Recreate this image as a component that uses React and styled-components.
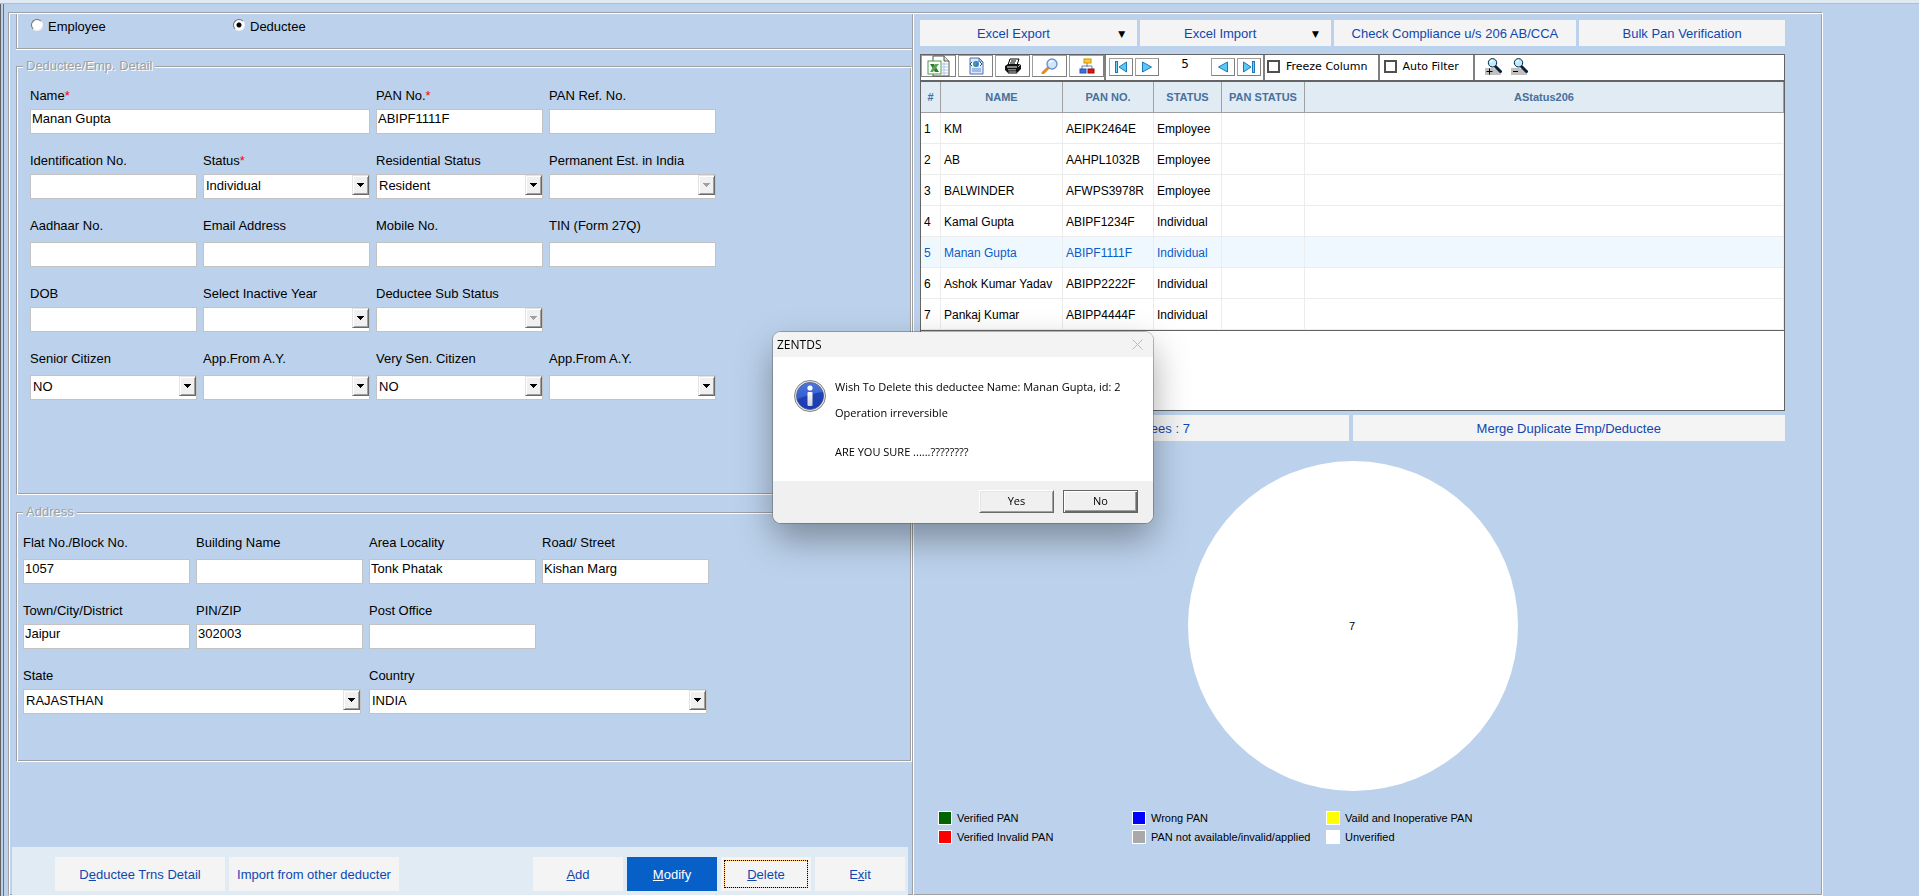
import React, { useId, useState } from "react";
import styled, { createGlobalStyle, css } from "styled-components";

const GlobalStyle = createGlobalStyle`
  * {
    box-sizing: border-box;
  }
  body {
    margin: 0;
    background: #bcd2ec;
    color: #000;
    font-family: "Liberation Sans", Arial, sans-serif;
    font-size: 13px;
    line-height: 16px;
  }
  button, input, select {
    font: inherit;
    color: inherit;
  }
`;

// sunken two-tone line used by every frame of the form
const etched = css`
  border: 1px solid;
  border-color: #a0a0a0 #fff #fff #a0a0a0;
  box-shadow: inset 1px 1px #fff, inset -1px -1px #a0a0a0;
`;

const Page = styled.div`
  min-height: 100vh;
  display: flex;
  flex-direction: column;
`;

const TopStrip = styled.div`
  height: 4px;
  background: #dfeaf2;
  border-bottom: 1px solid #b9bcc2;
`;

const Workspace = styled.div`
  flex: 1;
  display: flex;
  border-left: 1px solid #606060;
  padding-left: 2px;
`;

const Inner = styled.div`
  flex: 1;
  display: flex;
  border-left: 1px solid #707070;
  padding: 8px 96px 0 4px;
`;

const Frame = styled.main`
  ${etched}
  flex: 1;
  display: grid;
  grid-template-columns: 905fr 908fr;
  padding: 1px 1px 0;
`;

const LeftPane = styled.div`
  min-width: 0;
  display: flex;
  flex-direction: column;
  border-right: 1px solid #fff;
  box-shadow: inset -1px 0 #a0a0a0;
  padding-right: 1px;
`;

const RadioGroup = styled.div`
  display: flex;
  height: 35px;
  margin-left: 6px;
  padding: 0 14px;
  border: solid #a0a0a0;
  border-width: 0 0 1px 1px;
  box-shadow: inset 1px 0 #fff, 0 1px #fff;
`;

const RadioLabel = styled.label`
  display: flex;
  align-items: flex-start;
  gap: 5px;
  width: 202px;
  padding-top: 5px;
`;

const Radio = styled.input`
  appearance: none;
  width: 12px;
  height: 12px;
  margin: 0;
  border: 1px solid;
  border-color: #707070 #f0f0f0 #f0f0f0 #707070;
  border-radius: 50%;
  background: #fff;
  &:checked {
    background: radial-gradient(circle, #000 2px, #fff 3px);
  }
`;

const Group = styled.fieldset`
  ${etched}
  min-width: 0;
  margin: 9px 0 0 6px;
  padding: ${(p) => (p.$tall ? "14px 6px 94px" : "15px 6px 47px")};
`;

const Legend = styled.legend`
  padding: 0 3px;
  background: #bcd2ec;
  color: #a0a0a0;
  text-shadow: 1px 1px #fff;
`;

const Rows = styled.div`
  display: flex;
  flex-direction: column;
  gap: 19px;
  padding: 0 ${(p) => (p.$indent ? "7px" : "0")};
`;

const Row = styled.div`
  display: grid;
  grid-template-columns: repeat(4, minmax(0, 167px));
  gap: 6px;
`;

const FieldBox = styled.div`
  grid-column: span ${(p) => p.$span || 1};
  display: flex;
  flex-direction: column;
  gap: ${(p) => (p.$loose ? "8px" : "5px")};
`;

const Star = styled.span`
  color: #f00;
`;

const TextInput = styled.input`
  width: 100%;
  height: 25px;
  padding: 0 1px 6px;
  border: 1px solid #c3c3c3;
  border-radius: 0;
  background: #fff;
`;

const SelectFrame = styled.div`
  display: flex;
  height: 25px;
  border: 1px solid #c3c3c3;
  background: #fff;
  margin-right: ${(p) => (p.$span > 1 ? "2px" : "0")};
`;

const Select = styled.select`
  appearance: none;
  flex: 1;
  min-width: 0;
  border: none;
  background: transparent;
  padding: 0 2px 2px;
  opacity: 1;
`;

const Arrow = styled.span`
  display: flex;
  align-items: center;
  justify-content: center;
  width: 17px;
  height: 20px;
  background: #f0f0f0;
  border: 1px solid;
  border-color: #e3e3e3 #696969 #696969 #e3e3e3;
  box-shadow: inset 1px 1px #fff, inset -1px -1px #a0a0a0;
`;

const ActionBar = styled.div`
  display: flex;
  gap: 4px;
  margin: auto 4px 0 2px;
  padding: 10px 3px 4px 43px;
  background: #e0ebf3;
`;

const FlatButton = styled.button`
  display: flex;
  align-items: center;
  justify-content: center;
  flex: ${(p) => p.$grow || 1} 1 0;
  height: 26px;
  padding: 2px 0 0;
  border: none;
  border-radius: 0;
  background: #f4f4f4;
  color: #0f47b0;
`;

const BarButton = styled(FlatButton)`
  flex: 0 1 ${(p) => (p.$wide ? "170px" : "90px")};
  height: 34px;
  margin-left: ${(p) => (p.$push ? "auto" : "0")};
  ${(p) => p.$active && "background: #0760c8; color: #fff;"}
  ${(p) =>
    p.$focused &&
    `outline: 1px dotted #000; outline-offset: -4px; box-shadow: inset 0 0 0 3px #f4f4f4, inset 0 0 0 4px #ffc878;`}
`;

const RightPane = styled.div`
  min-width: 0;
  padding: 6px 36px 0 6px;
`;

const ButtonRow = styled.div`
  display: flex;
  gap: ${(p) => (p.$wide ? "4px" : "3px")};
`;

const MenuText = styled.span`
  flex: 1;
`;

const MenuArrow = styled.span`
  width: 30px;
  color: #000;
  font-family: "DejaVu Sans", sans-serif;
  font-size: 9px;
`;

const GridBox = styled.section`
  margin: 8px 0 4px;
  padding-bottom: 79px;
  border: 1px solid #646464;
  background: #fff;
`;

const Toolbar = styled.div`
  display: flex;
  height: 27px;
  border-bottom: 2px solid #646464;
  font-family: "DejaVu Sans", Verdana, sans-serif;
  font-size: 11px;
`;

const ToolSection = styled.div`
  display: flex;
  align-items: ${(p) => (p.$top ? "flex-start" : "center")};
  gap: ${(p) => p.$gap || 2}px;
  padding: 0 ${(p) => p.$end || 0}px 2px ${(p) => p.$start || 0}px;
  border-right: ${(p) => (p.$last ? "none" : "2px solid #808080")};
`;

const ToolButton = styled.button`
  display: flex;
  align-items: center;
  justify-content: center;
  width: 35px;
  height: 22px;
  padding: 0;
  background: #fff;
  border: 1px solid #808080;
  border-top-color: #a0a0a0;
  border-left-color: #a0a0a0;
`;

const NavButton = styled(ToolButton)`
  width: 24px;
  height: 18px;
`;

const PlainButton = styled.button`
  display: flex;
  padding: 0;
  border: none;
  background: none;
`;

const Position = styled.output`
  width: 48px;
  text-align: center;
  line-height: 12px;
  padding-bottom: 5px;
  font-size: 12px;
`;

const CheckLabel = styled.label`
  display: flex;
  align-items: center;
  gap: 6px;
`;

const Check = styled.input`
  appearance: none;
  width: 13px;
  height: 13px;
  margin: 0;
  border: 2px solid #505050;
  background: #fff;
`;

const Table = styled.table`
  width: 100%;
  table-layout: fixed;
  border-collapse: separate;
  border-spacing: 0;
  border-bottom: 1px solid #646464;
  font-size: 12px;
`;

const Th = styled.th`
  height: 31px;
  padding: 0;
  background: #e0ebf3;
  border-right: 1px solid #a0a0a0;
  border-bottom: 1px solid #a0a0a0;
  color: #48709c;
  font-size: 11px;
`;

const Td = styled.td`
  height: 31px;
  padding: 2px 3px 0;
  border-right: 1px solid #ececec;
  border-bottom: 1px solid #ececec;
  white-space: nowrap;
`;

const Tr = styled.tr`
  ${(p) => p.$selected && "background: #f0f8ff; color: #0a5cc8;"}
`;

const Pie = styled.svg`
  display: block;
  width: 330px;
  max-width: 100%;
  margin: 20px auto;
`;

const PieLegend = styled.ul`
  display: grid;
  grid-template-columns: repeat(3, 194px);
  grid-auto-rows: 14px;
  row-gap: 5px;
  margin: 0;
  padding: 0 18px;
  list-style: none;
  font-size: 11px;
`;

const LegendItem = styled.li`
  display: flex;
  align-items: center;
  gap: 5px;
  white-space: nowrap;
`;

const Swatch = styled.span`
  width: 14px;
  height: 14px;
  border: 1px solid #fff;
  background: ${(p) => p.$color};
`;

const Dialog = styled.div`
  position: fixed;
  top: 332px;
  left: 773px;
  width: 380px;
  border-radius: 8px;
  overflow: hidden;
  background: #fff;
  box-shadow: 0 0 0 1px rgba(80, 80, 80, 0.4), 0 16px 36px rgba(0, 0, 0, 0.35);
  font-family: "Open Sans", "Noto Sans", sans-serif;
  font-size: 11px;
  line-height: 13px;
`;

const DialogTitle = styled.header`
  display: flex;
  align-items: center;
  justify-content: space-between;
  height: 25px;
  padding: 0 10px 0 4px;
  background: #f3f3f3;
  font-size: 12px;
`;

const DialogBody = styled.div`
  display: flex;
  gap: 9px;
  height: 124px;
  padding: 23px 21px 0;
`;

const DialogText = styled.p`
  margin: 0;
  white-space: pre;
`;

const DialogFooter = styled.footer`
  display: flex;
  justify-content: flex-end;
  gap: 9px;
  padding: 9px 15px 10px;
  background: #f0f0f0;
`;

const DialogButton = styled.button`
  width: 75px;
  height: 23px;
  padding: 0 0 2px;
  background: #f0f0f0;
  border: 1px solid;
  border-color: ${(p) => (p.$default ? "#646464" : "#fff #696969 #696969 #fff")};
  box-shadow: ${(p) =>
    p.$default
      ? "inset 1px 1px #fff, inset -1px -1px #696969, inset -2px -2px #a0a0a0"
      : "inset 1px 1px #e3e3e3, inset -1px -1px #a0a0a0"};
`;

const rows = [
  ["KM", "AEIPK2464E", "Employee"],
  ["AB", "AAHPL1032B", "Employee"],
  ["BALWINDER", "AFWPS3978R", "Employee"],
  ["Kamal Gupta", "ABIPF1234F", "Individual"],
  ["Manan Gupta", "ABIPF1111F", "Individual"],
  ["Ashok Kumar Yadav", "ABIPP2222F", "Individual"],
  ["Pankaj Kumar", "ABIPP4444F", "Individual"],
];

const panStatuses = [
  ["#006400", "Verified PAN"],
  ["#0000ff", "Wrong PAN"],
  ["#ffff00", "Vaild and Inoperative PAN"],
  ["#ff0000", "Verified Invalid PAN"],
  ["#a9a9a9", "PAN not available/invalid/applied"],
  ["#ffffff", "Unverified"],
];

function Field({ label, required, value = "", options, disabled, loose, span }) {
  const id = useId();
  return (
    <FieldBox $loose={loose} $span={span}>
      <label htmlFor={id}>
        {label}
        {required && <Star>*</Star>}
      </label>
      {options ? (
        <SelectFrame $span={span}>
          <Select id={id} defaultValue={value} disabled={disabled}>
            {options.map((o) => (
              <option key={o}>{o}</option>
            ))}
          </Select>
          <Arrow aria-hidden="true">
            <svg width="7" height="4" viewBox="0 0 7 4" shapeRendering="crispEdges">
              <path d="M0 0H7V1H6V2H5V3H4V4H3V3H2V2H1V1H0Z" fill={disabled ? "#a0a0a0" : "#000"} />
            </svg>
          </Arrow>
        </SelectFrame>
      ) : (
        <TextInput id={id} type="text" defaultValue={value} />
      )}
    </FieldBox>
  );
}

const ExcelIcon = () => (
  <svg width="24" height="22" viewBox="0 0 24 22">
    <path d="M6 1h11l5 5v15H6z" fill="#fff" stroke="#555" />
    <path d="M17 1v5h5" fill="#ddd" stroke="#555" />
    <path d="M15 9h6M15 12h6M15 15h6M15 18h6M17 7v13" stroke="#a9c8e8" />
    <rect x="1" y="6" width="13" height="13" fill="#fff" stroke="#4c9a4c" />
    <path d="M3 9h4l5 8H8z" fill="#2a7a2a" />
    <path d="M12 9H8l-5 8h3z" fill="#59a659" />
  </svg>
);

const WebPageIcon = () => (
  <svg width="16" height="18" viewBox="0 0 16 18">
    <path d="M2 1h9l4 4v12H2z" fill="#dbe9fb" stroke="#4a6eb4" />
    <path d="M11 1v4h4z" fill="#b8cff0" stroke="#4a6eb4" />
    <path d="M3 5h11v4H3z" fill="#fff" />
    <circle cx="8" cy="7" r="3" fill="#2f7fd0" />
    <path d="M7 5c2 0 2 2 1 3s-2 0-2-1z" fill="#4fb04a" />
    <path d="M4 5L2 7l2 2M12 5l2 2-2 2" fill="none" stroke="#2c4a88" />
    <path d="M4 12h9M4 14h9" stroke="#6a8cc8" />
  </svg>
);

const PrinterIcon = () => (
  <svg width="18" height="16" viewBox="0 0 18 16">
    <path d="M6 1h9l-2 6H4z" fill="#fff" stroke="#000" />
    <path d="M7 3h5M6 5h5" stroke="#000" />
    <path d="M1 8l3-2h11l2 1v4l-3 3H3l-2-2z" fill="#111" />
    <path d="M3 9h10M4 12h8" stroke="#fff" />
    <path d="M14 9l2-2" stroke="#bbb" />
    <path d="M4 13h9v2H4z" fill="#ddd" stroke="#000" />
  </svg>
);

const SearchIcon = () => (
  <svg width="18" height="16" viewBox="0 0 18 16">
    <path d="M7 10l-5 5" stroke="#e08a28" strokeWidth="3" strokeLinecap="round" />
    <circle cx="11" cy="6" r="5" fill="#cfe6fb" stroke="#6f92d0" strokeWidth="1.4" />
    <path d="M8 5c1-2 3-2 4-2" stroke="#fff" fill="none" strokeWidth="1.4" />
  </svg>
);

const TreeIcon = () => (
  <svg width="16" height="16" viewBox="0 0 16 16">
    <path d="M8 5v4M3 11V8h10v3" fill="none" stroke="#6a7ea0" />
    <rect x="5" y="1" width="7" height="4" fill="#ffcc22" stroke="#c89210" />
    <rect x="1" y="11" width="6" height="4" fill="#3a6ee0" stroke="#2a50b0" />
    <rect x="9" y="11" width="6" height="4" fill="#d81818" stroke="#980c0c" />
  </svg>
);

function NavIcon({ back, end }) {
  return (
    <svg width="14" height="12" viewBox="0 0 14 12">
      <g transform={back ? "" : "translate(14 0) scale(-1 1)"}>
        {end && <rect x="1.500" y="0.500" width="2" height="11" fill="#6fd0f5" stroke="#1878b8" />}
        <path d={end ? "M12.500 1v10L5 6z" : "M11.500 1v10L2.500 6z"} fill="#5cc8f5" stroke="#1878b8" />
      </g>
    </svg>
  );
}

const ZoomIcon = ({ plus }) => (
  <svg width="17" height="17" viewBox="0 0 17 17">
    <path d="M0 10h8l8 3v4H0z" fill="#c0c0c0" />
    <path d={plus ? "M1.500 13.500h6M4.500 10.500v6" : "M2 13.500h5"} stroke="#000" />
    <path d="M10.500 8.500l5 5" stroke="#0a2038" strokeWidth="3" strokeLinecap="round" />
    <circle cx="7.500" cy="4.800" r="4.200" fill="#b8ecff" stroke="#0a2038" />
    <path d="M5.500 4l2-2" stroke="#fff" strokeWidth="1.500" />
  </svg>
);

const InfoIcon = () => (
  <svg width="32" height="32" viewBox="0 0 32 32">
    <defs>
      <linearGradient id="infoBlue" x1="0" y1="0" x2="0" y2="1">
        <stop offset="0" stopColor="#4c78dc" />
        <stop offset="1" stopColor="#2348c8" />
      </linearGradient>
      <linearGradient id="infoStem" x1="0" y1="0" x2="0" y2="1">
        <stop offset="0" stopColor="#fff" />
        <stop offset="1" stopColor="#d0d0d0" />
      </linearGradient>
    </defs>
    <circle cx="16" cy="16" r="15.500" fill="#e8e8e8" stroke="#808080" />
    <circle cx="16" cy="16" r="13.500" fill="url(#infoBlue)" stroke="#5a6a98" />
    <path d="M3 19C10 17 18 13 29 12a13 13 0 0 1-26 7z" fill="#1636a8" opacity="0.7" />
    <circle cx="16" cy="8" r="2.600" fill="#fff" />
    <rect x="13.500" y="12" width="5" height="14" rx="1" fill="url(#infoStem)" />
  </svg>
);

function DeducteeForm() {
  return (
    <>
      <Group $tall>
        <Legend>Deductee/Emp. Detail</Legend>
        <Rows $indent>
          <Row>
            <Field label="Name" required value="Manan Gupta" span={2} />
            <Field label="PAN No." required value="ABIPF1111F" />
            <Field label="PAN Ref. No." />
          </Row>
          <Row>
            <Field label="Identification No." />
            <Field label="Status" required value="Individual" options={["Individual", "Company"]} />
            <Field label="Residential Status" value="Resident" options={["Resident", "Non Resident"]} />
            <Field label="Permanent Est. in India" options={[""]} disabled />
          </Row>
          <Row>
            <Field label="Aadhaar No." loose />
            <Field label="Email Address" loose />
            <Field label="Mobile No." loose />
            <Field label="TIN (Form 27Q)" loose />
          </Row>
          <Row>
            <Field label="DOB" />
            <Field label="Select Inactive Year" options={[""]} />
            <Field label="Deductee Sub Status" options={[""]} disabled />
          </Row>
          <Row>
            <Field label="Senior Citizen" value="NO" options={["NO", "YES"]} loose />
            <Field label="App.From A.Y." options={[""]} loose />
            <Field label="Very Sen. Citizen" value="NO" options={["NO", "YES"]} loose />
            <Field label="App.From A.Y." options={[""]} loose />
          </Row>
        </Rows>
      </Group>

      <Group>
        <Legend>Address</Legend>
        <Rows>
          <Row>
            <Field label="Flat No./Block No." value="1057" loose />
            <Field label="Building Name" loose />
            <Field label="Area Locality" value="Tonk Phatak" loose />
            <Field label="Road/ Street" value="Kishan Marg" loose />
          </Row>
          <Row>
            <Field label="Town/City/District" value="Jaipur" />
            <Field label="PIN/ZIP" value="302003" />
            <Field label="Post Office" />
          </Row>
          <Row>
            <Field label="State" value="RAJASTHAN" options={["RAJASTHAN"]} span={2} />
            <Field label="Country" value="INDIA" options={["INDIA"]} span={2} />
          </Row>
        </Rows>
      </Group>
    </>
  );
}

function DeducteeGrid() {
  return (
    <GridBox>
      <Toolbar>
        <ToolSection $top>
          <ToolButton aria-label="Export to Excel"><ExcelIcon /></ToolButton>
          <ToolButton aria-label="Export to web page"><WebPageIcon /></ToolButton>
          <ToolButton aria-label="Print"><PrinterIcon /></ToolButton>
          <ToolButton aria-label="Search"><SearchIcon /></ToolButton>
          <ToolButton aria-label="Group"><TreeIcon /></ToolButton>
        </ToolSection>
        <ToolSection $start={3} $end={2}>
          <NavButton aria-label="First"><NavIcon back end /></NavButton>
          <NavButton aria-label="Next"><NavIcon /></NavButton>
          <Position>5</Position>
          <NavButton aria-label="Previous"><NavIcon back /></NavButton>
          <NavButton aria-label="Last"><NavIcon end /></NavButton>
        </ToolSection>
        <ToolSection $start={2} $end={10}>
          <CheckLabel>
            <Check type="checkbox" />
            Freeze Column
          </CheckLabel>
        </ToolSection>
        <ToolSection $start={4} $end={14}>
          <CheckLabel>
            <Check type="checkbox" />
            Auto Filter
          </CheckLabel>
        </ToolSection>
        <ToolSection $start={10} $gap={9} $last>
          <PlainButton aria-label="Zoom in"><ZoomIcon plus /></PlainButton>
          <PlainButton aria-label="Zoom out"><ZoomIcon /></PlainButton>
        </ToolSection>
      </Toolbar>
      <Table>
        <colgroup>
          <col width="20" />
          <col width="122" />
          <col width="91" />
          <col width="68" />
          <col width="83" />
          <col />
        </colgroup>
        <thead>
          <tr>
            <Th>#</Th>
            <Th>NAME</Th>
            <Th>PAN NO.</Th>
            <Th>STATUS</Th>
            <Th>PAN STATUS</Th>
            <Th>AStatus206</Th>
          </tr>
        </thead>
        <tbody>
          {rows.map(([name, pan, status], i) => (
            <Tr key={pan} $selected={i === 4}>
              <Td>{i + 1}</Td>
              <Td>{name}</Td>
              <Td>{pan}</Td>
              <Td>{status}</Td>
              <Td />
              <Td />
            </Tr>
          ))}
        </tbody>
      </Table>
    </GridBox>
  );
}

function ConfirmDialog({ onClose }) {
  return (
    <Dialog role="dialog" aria-label="ZENTDS">
      <DialogTitle>
        ZENTDS
        <PlainButton aria-label="Close" onClick={onClose}>
          <svg width="11" height="11" viewBox="0 0 11 11">
            <path d="M0.500 0.500l10 10M10.500 0.500l-10 10" stroke="#b8b8b8" />
          </svg>
        </PlainButton>
      </DialogTitle>
      <DialogBody>
        <InfoIcon />
        <DialogText>
          {"Wish To Delete this deductee Name: Manan Gupta, id: 2\n\nOperation irreversible\n\n\nARE YOU SURE ......????????"}
        </DialogText>
      </DialogBody>
      <DialogFooter>
        <DialogButton onClick={onClose}>Yes</DialogButton>
        <DialogButton $default onClick={onClose}>No</DialogButton>
      </DialogFooter>
    </Dialog>
  );
}

function App() {
  const [kind, setKind] = useState("Deductee");
  const [confirming, setConfirming] = useState(true);

  return (
    <Page>
      <GlobalStyle />
      <TopStrip />
      <Workspace>
        <Inner>
          <Frame>
            <LeftPane>
              <RadioGroup>
                {["Employee", "Deductee"].map((k) => (
                  <RadioLabel key={k}>
                    <Radio type="radio" name="kind" checked={kind === k} onChange={() => setKind(k)} />
                    {k}
                  </RadioLabel>
                ))}
              </RadioGroup>
              <DeducteeForm />
              <ActionBar>
                <BarButton $wide><span>D<u>e</u>ductee Trns Detail</span></BarButton>
                <BarButton $wide>Import from other deducter</BarButton>
                <BarButton $push><span><u>A</u>dd</span></BarButton>
                <BarButton $active><span><u>M</u>odify</span></BarButton>
                <BarButton $focused onClick={() => setConfirming(true)}><span><u>D</u>elete</span></BarButton>
                <BarButton><span>E<u>x</u>it</span></BarButton>
              </ActionBar>
            </LeftPane>

            <RightPane>
              <ButtonRow>
                <FlatButton $grow={217}>
                  <MenuText>Excel Export</MenuText>
                  <MenuArrow>▼</MenuArrow>
                </FlatButton>
                <FlatButton $grow={191}>
                  <MenuText>Excel Import</MenuText>
                  <MenuArrow>▼</MenuArrow>
                </FlatButton>
                <FlatButton $grow={243}>Check Compliance u/s 206 AB/CCA</FlatButton>
                <FlatButton $grow={206}>Bulk Pan Verification</FlatButton>
              </ButtonRow>
              <DeducteeGrid />
              <ButtonRow $wide>
                <FlatButton $grow={429}>Total Deductees : 7</FlatButton>
                <FlatButton $grow={433}>Merge Duplicate Emp/Deductee</FlatButton>
              </ButtonRow>
              <Pie viewBox="0 0 330 330">
                <circle cx="165" cy="165" r="165" fill="#fff" />
                <text x="164" y="169" textAnchor="middle" fontSize="11">7</text>
              </Pie>
              <PieLegend>
                {panStatuses.map(([color, text]) => (
                  <LegendItem key={text}>
                    <Swatch $color={color} />
                    {text}
                  </LegendItem>
                ))}
              </PieLegend>
            </RightPane>
          </Frame>
        </Inner>
      </Workspace>
      {confirming && <ConfirmDialog onClose={() => setConfirming(false)} />}
    </Page>
  );
}

export default App;
